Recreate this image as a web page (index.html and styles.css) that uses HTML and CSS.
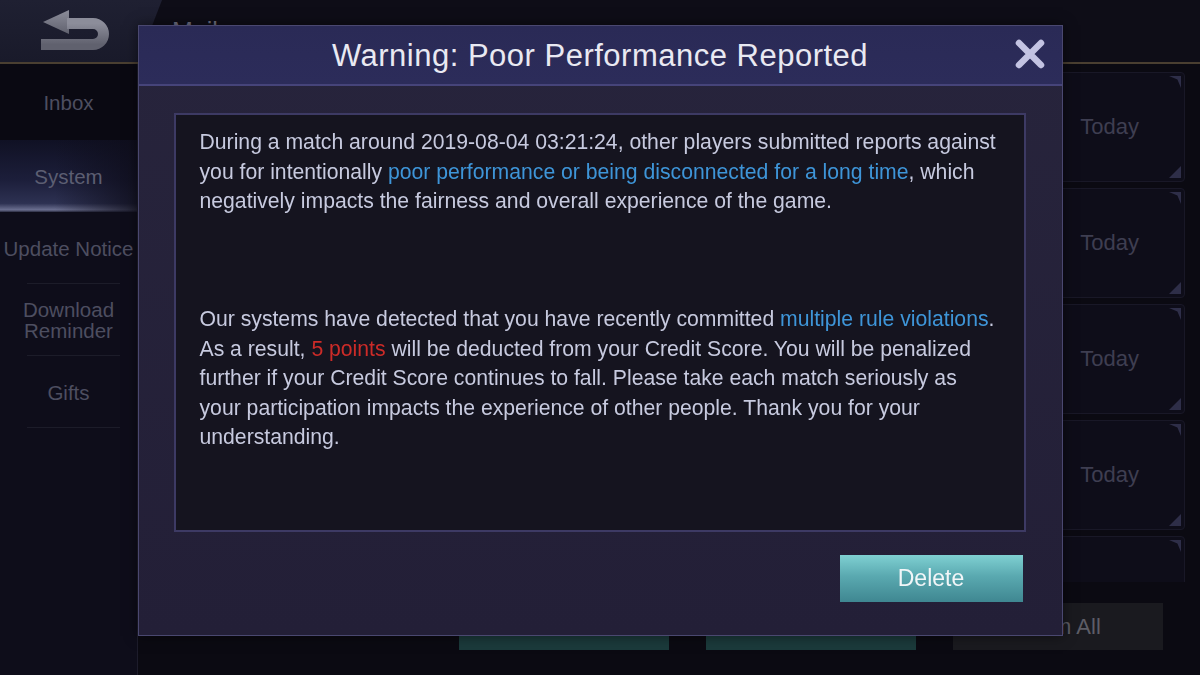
FILE: index.html
```html
<!DOCTYPE html>
<html lang="en">
<head>
    <meta charset="UTF-8">
    <meta name="viewport" content="width=device-width, initial-scale=1.0">
    <title>Mail</title>
    <link rel="stylesheet" href="styles.css">
</head>
<body>

<div class="app">
    <header class="topbar">
        <div class="back">
            <!-- back arrow -->
            <svg width="76" height="46" viewBox="0 0 76 46">
                <defs>
                    <linearGradient id="arrowGrey" x1="0" y1="0" x2="0" y2="1">
                        <stop offset="0" stop-color="#8c8d9a"/>
                        <stop offset="1" stop-color="#60616e"/>
                    </linearGradient>
                </defs>
                <polygon points="31,2 5,14 31,26" fill="url(#arrowGrey)"/>
                <path d="M29 15.5 H55 A10.5 10.5 0 0 1 55 36.5 H3" fill="none" stroke="url(#arrowGrey)" stroke-width="11"/>
            </svg>
        </div>
        <h1 class="title">Mail</h1>
    </header>

    <div class="main">
        <nav class="tabs">
            <div class="tab first">Inbox</div>
            <div class="tab active">System</div>
            <div class="tab">Update Notice</div>
            <div class="tab">Download<br>Reminder</div>
            <div class="tab">Gifts</div>
        </nav>

        <section class="mail">
            <div class="mail-list">
                <div class="mail-item"><span class="date">Today</span></div>
                <div class="mail-item"><span class="date">Today</span></div>
                <div class="mail-item"><span class="date">Today</span></div>
                <div class="mail-item"><span class="date">Today</span></div>
                <div class="mail-item"></div>
            </div>
            <div class="mail-actions">
                <button class="btn teal">Delete Read</button>
                <button class="btn teal">Claim</button>
                <button class="btn grey">Claim All</button>
            </div>
        </section>
    </div>
</div>

<!-- report notice popup -->
<div class="overlay">
    <div class="dialog">
        <div class="dialog-head">
            <h2>Warning: Poor Performance Reported</h2>
            <button class="close" aria-label="Close">
                <svg width="34" height="34" viewBox="0 0 34 34">
                    <path d="M6 6 L28 28 M28 6 L6 28" stroke="#c3c3e2" stroke-width="6.5" stroke-linecap="round"/>
                </svg>
            </button>
        </div>
        <div class="dialog-body">
            <div class="message">
                <p>During a match around 2019-08-04 03:21:24, other players submitted reports against you for intentionally <span class="blue">poor performance or being disconnected for a long time</span>, which negatively impacts the fairness and overall experience of the game.</p>
                <p class="gap">Our systems have detected that you have recently committed <span class="blue">multiple rule violations</span>. As a result, <span class="red">5 points</span> will be deducted from your Credit Score. You will be penalized further if your Credit Score continues to fall. Please take each match seriously as your participation impacts the experience of other people. Thank you for your understanding.</p>
            </div>
            <div class="dialog-foot">
                <button class="delete">Delete</button>
            </div>
        </div>
    </div>
</div>

</body>
</html>
```

FILE: styles.css
```css
body {
    margin: 0;
    width: 1200px;
    height: 675px;
    overflow: hidden;
    background-color: #0b0a12;
    font-family: "Liberation Sans", Arial, sans-serif;
    color: #4c4d5e;
}
.app {
    display: flex;
    flex-direction: column;
    height: 675px;
}

/* top bar */
.topbar {
    display: flex;
    align-items: center;
    height: 62px;
    background-color: #0e0d17;
    border-bottom: 2px solid #4a3f31;
}
.back {
    width: 162px;
    height: 62px;
    background: linear-gradient(180deg, #1f2032, #191a2a);
    clip-path: polygon(0 0, 162px 0, 138px 100%, 0 100%);
    display: flex;
    align-items: center;
    padding-left: 38px;
    box-sizing: border-box;
}
.title {
    margin: 0 0 0 10px;
    font-size: 25px;
    font-weight: normal;
    color: #6f6f82;
}

.main {
    flex: 1;
    display: flex;
}

/* left tabs */
.tabs {
    width: 137px;
    background-color: #0e0d1a;
    border-right: 1px solid #1d1c2b;
}
.tab {
    height: 72px;
    display: flex;
    align-items: center;
    justify-content: center;
    text-align: center;
    font-size: 20.5px;
    line-height: 21px;
    white-space: nowrap;
    color: #4d4e60;
    position: relative;
}
.tab.first {
    height: 76px;
    background-color: #0a0912;
}
.tab::after {
    content: "";
    position: absolute;
    left: 27px;
    right: 17px;
    bottom: 0;
    height: 1px;
    background-color: #1c1c29;
}
.tab.first::after,
.tab.active::after {
    display: none;
}
.tab.active {
    color: #5c5e72;
    background:
        linear-gradient(90deg, rgba(14, 13, 26, 0) 40%, rgba(14, 13, 26, 0.8) 100%),
        linear-gradient(180deg, #101124 0%, #1c1e3a 55%, #2d3152 88%, #6b6f90 97%, #2a2b40 100%);
}

/* mail list */
.mail {
    flex: 1;
    display: flex;
    flex-direction: column;
    padding: 8px 15px 0 8px;
}
.mail-list {
    height: 510px;
    overflow: hidden;
    display: flex;
    flex-direction: column;
    gap: 6px;
}
.mail-item {
    flex-shrink: 0;
    box-sizing: border-box;
    height: 110px;
    background-color: #0e0d19;
    border: 1px solid #191827;
    border-radius: 4px;
    display: flex;
    align-items: center;
    justify-content: flex-end;
    padding-right: 45px;
    position: relative;
}
.mail-item::before,
.mail-item::after {
    content: "";
    position: absolute;
    right: 3px;
    width: 12px;
    height: 12px;
    background-color: #2e2e48;
}
.mail-item::before {
    top: 3px;
    clip-path: polygon(0 0, 100% 0, 100% 100%, 70% 30%);
}
.mail-item::after {
    bottom: 3px;
    clip-path: polygon(100% 0, 100% 100%, 0 100%);
}
.date {
    font-size: 22px;
    color: #3e3e51;
}
.mail-actions {
    display: flex;
    justify-content: flex-end;
    gap: 37px;
    margin-top: 21px;
    padding-right: 22px;
}
.btn {
    width: 210px;
    height: 47px;
    border: none;
    font-family: inherit;
    font-size: 22px;
}
.btn.teal {
    background-color: #1b3a3b;
    color: #5d8c8c;
}
.btn.grey {
    background-color: #1a1a1f;
    color: #5d5d66;
}

/* popup */
.overlay {
    position: fixed;
    top: 0;
    left: 0;
    right: 0;
    bottom: 0;
    display: flex;
    justify-content: center;
    align-items: flex-start;
    padding-top: 25px;
}
.dialog {
    width: 925px;
    height: 611px;
    box-sizing: border-box;
    border: 1px solid #4a4870;
    background: linear-gradient(180deg, #27243c 0%, #231f37 100%);
    display: flex;
    flex-direction: column;
    box-shadow: 0 0 12px rgba(0, 0, 0, 0.5);
}
.dialog-head {
    height: 58px;
    flex-shrink: 0;
    background: linear-gradient(180deg, #2a2a56, #2c2c5a);
    border-bottom: 2px solid #46447a;
    display: flex;
    align-items: center;
    justify-content: center;
    position: relative;
}
.dialog-head h2 {
    margin: 2px 0 0 0;
    font-size: 31px;
    font-weight: normal;
    letter-spacing: 0.5px;
    color: #e9e9f2;
}
.close {
    position: absolute;
    right: 15px;
    top: 11px;
    background: none;
    border: none;
    padding: 0;
    cursor: pointer;
}
.dialog-body {
    flex: 1;
    padding: 27px 36px 0 35px;
    display: flex;
    flex-direction: column;
}
.message {
    height: 419px;
    box-sizing: border-box;
    border: 2px solid #3d3a64;
    background-color: #15141f;
    padding: 12px 24px 0 24px;
    font-size: 21.2px;
    line-height: 29.5px;
    color: #c7cadf;
}
.message p {
    margin: 0;
}
.message p.gap {
    margin-top: 88.5px;
}
.blue {
    color: #3e95d8;
}
.red {
    color: #cc2b28;
}
.dialog-foot {
    display: flex;
    justify-content: flex-end;
    padding-top: 23px;
    padding-right: 3px;
}
.delete {
    width: 183px;
    height: 47px;
    border: none;
    background: linear-gradient(180deg, #7fd0d2 0%, #5aa9b0 45%, #3f8791 100%);
    color: #f2f6f8;
    font-family: inherit;
    font-size: 23px;
    cursor: pointer;
}
```
